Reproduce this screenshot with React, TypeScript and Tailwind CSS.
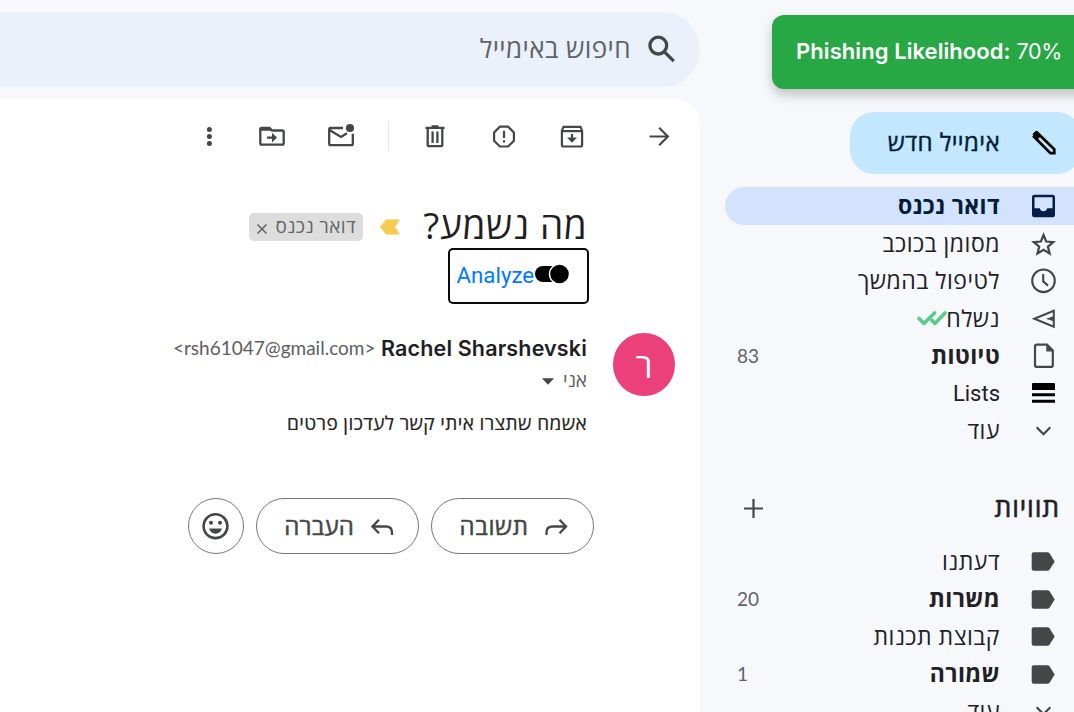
import React, { type ReactNode } from "react";

type IconProps = { children: ReactNode; className?: string };

function Icon({ children, className = "stroke-[2.3]" }: IconProps) {
  return (
    <svg viewBox="0 0 32 32" className={`h-8 w-8 shrink-0 fill-none stroke-[#444746] ${className}`}>
      {children}
    </svg>
  );
}

const icons = {
  inbox: (
    <Icon className="stroke-none">
      <path
        fill="#041e49"
        fillRule="evenodd"
        d="M6.3 4.7h18.4q2.3 0 2.3 2.3v18q0 2.3-2.3 2.3H6.3q-2.3 0-2.3-2.3V7q0-2.3 2.3-2.3ZM6.5 7.2v11h5.3a3.8 3.8 0 0 0 7.4 0h5.3v-11Z"
      />
    </Icon>
  ),
  star: (
    <Icon className="stroke-[2.1]">
      <path
        d="M16 7.4 18.5 13.5 25.2 14 20.1 18.3 21.7 24.8 16 21.3 10.3 24.8 11.9 18.3 6.8 14 13.5 13.5Z"
        transform="translate(-1.4 .2) scale(1.06)"
      />
    </Icon>
  ),
  clock: (
    <Icon className="stroke-[2.1]">
      <circle cx="15.5" cy="15.8" r="11.3" />
      <path d="M15.2 9v7.4l4.8 4.2" />
    </Icon>
  ),
  sent: (
    <Icon className="stroke-[2]">
      <path d="M25.8 8.800 6.300 16.800l19.500 8Z" />
      <path d="M25.500 14.300 18 16.800l7.500 2.500Z" fill="#444746" stroke="none" />
    </Icon>
  ),
  draft: (
    <Icon className="stroke-[2.2]">
      <path d="M9 4.700h10l5.800 5.800v14.400q0 2-2 2H9q-2 0-2-2V6.700q0-2 2-2Z" />
      <path d="M18.300 4.300v7.300h7Z" fill="#444746" stroke="none" />
    </Icon>
  ),
  lists: (
    <Icon className="stroke-none">
      <path fill="#000" d="M4 6.900q0-1 1-1h21q1 0 1 1v6H4ZM4 16.300h23v3H4ZM4 22.800h23v3H4Z" />
    </Icon>
  ),
  more: (
    <Icon className="stroke-[2.2]">
      <path d="m8.700 12.200 6.800 7 6.800-7" />
    </Icon>
  ),
  label: (
    <Icon className="stroke-none">
      <path
        fill="#444746"
        d="M5.700 7.300h13.800q1.200 0 2 1l5.200 8.200-5.200 8.200q-.8 1-2 1H5.700q-2 0-2-2V9.300q0-2 2-2Z"
      />
    </Icon>
  ),
};

type Row = {
  icon: ReactNode;
  text: string;
  count?: string;
  bold?: boolean;
  active?: boolean;
  check?: boolean;
  latin?: boolean;
};

const folders: Row[] = [
  { icon: icons.inbox, text: "דואר נכנס", bold: true, active: true },
  { icon: icons.star, text: "מסומן בכוכב" },
  { icon: icons.clock, text: "לטיפול בהמשך" },
  { icon: icons.sent, text: "נשלח", check: true },
  { icon: icons.draft, text: "טיוטות", count: "83", bold: true },
  { icon: icons.lists, text: "Lists", latin: true },
  { icon: icons.more, text: "עוד" },
];

const labels: Row[] = [
  { icon: icons.label, text: "דעתנו" },
  { icon: icons.label, text: "משרות", count: "20", bold: true },
  { icon: icons.label, text: "קבוצת תכנות" },
  { icon: icons.label, text: "שמורה", count: "1", bold: true },
  { icon: icons.more, text: "עוד" },
];

function NavRow({ icon, text, count, bold, active, check, latin }: Row) {
  return (
    <div
      dir="rtl"
      className={`ml-[25px] flex h-[37.5px] items-center pr-[14.5px] ${
        active ? "rounded-l-full bg-[#d3e3fd] text-[#001d35]" : "text-[#202124]"
      }`}
    >
      {icon}
      <span
        className={`mr-[27.5px] leading-none whitespace-nowrap ${
          latin ? "pt-[2px] font-['Roboto',sans-serif] text-[22px]" : "text-[23px]"
        } ${bold ? "font-bold tracking-[0.4px]" : latin ? "" : "tracking-[0.5px]"}`}
      >
        {text}
      </span>
      {check && (
        <svg viewBox="0 0 30 16" className="-mr-px h-4 w-[30px] fill-none stroke-[#5bcb87] stroke-[3.6]">
          <path d="m2 8.5 5 5L17.5 3M15 10.5l3 3L28 3" strokeLinecap="round" strokeLinejoin="round" />
        </svg>
      )}
      {count && (
        <span
          dir="ltr"
          className="mr-auto ml-[12px] min-w-[22px] text-left font-['Lato',sans-serif] text-[19px] leading-none text-[#5f6368]"
        >
          {count}
        </span>
      )}
    </div>
  );
}

function Toolbar() {
  return (
    <div className="mt-[21px] ml-[193px] flex h-8 items-center">
      <Icon className="stroke-none">
        <g fill="#444746">
          <circle cx="16.4" cy="9.5" r="2.5" />
          <circle cx="16.4" cy="16.5" r="2.5" />
          <circle cx="16.4" cy="23.5" r="2.5" />
        </g>
      </Icon>
      <Icon className="ml-[31px] stroke-[2.3]">
        <path d="M4.3 8.5v14.8q0 1.4 1.4 1.4h20.6q1.4 0 1.4-1.4V11.900q0-1.400-1.400-1.400H16l-2.400-2.600H5.700q-1.400 0-1.400 1.400ZM11 17.600h8" />
        <path d="M3.500 10.800V9.100q0-2 2-2H13l3.300 3.700Z" fill="#444746" stroke="none" />
        <path d="m16 12.700 5 4.900-5 4.900Z" fill="#444746" stroke="none" />
      </Icon>
      <Icon className="ml-[36.5px] stroke-[2.3]">
        <path d="M18 8H5.600q-1.400 0-1.400 1.400v14.300q0 1.400 1.400 1.400h20.800q1.400 0 1.400-1.400v-10M5 10.300l11 6.700 6-3.800" />
        <circle cx="25" cy="8" r="4.100" fill="#444746" stroke="none" />
      </Icon>
      <div className="ml-[31.5px] h-[30px] w-px bg-[#e1e8f0]" />
      <Icon className="ml-[29.5px] stroke-[2.3]">
        <path d="M6.500 7.800h19M12.500 6.500h7" />
        <path d="M8.700 8.500v16.200q0 1.500 1.500 1.500h11.600q1.500 0 1.500-1.500V8.500" />
        <path d="M13.600 11.500v11.500M18.400 11.500v11.500" />
      </Icon>
      <Icon className="ml-[37px] stroke-[2.2]">
        <path d="M11.900 6.700h8.200l5.800 5.800v8.200l-5.800 5.800h-8.200l-5.800-5.800v-8.200Z" />
        <path d="M16 10.800v7.200M16 20.200v2.400" />
      </Icon>
      <Icon className="ml-[36px] stroke-[2.2]">
        <path d="M5.900 10.700 7.500 6.800h17l1.600 3.900v14.200q0 1.600-1.600 1.600H7.500q-1.600 0-1.600-1.600ZM5.900 11.100h20.200M16 14v6" />
        <path d="m11 17.500 5 5.300 5-5.300Z" fill="#444746" stroke="none" />
      </Icon>
      <Icon className="ml-[55px] stroke-[2.2]">
        <path d="M6.500 16.500h17.800M16.200 7.800l8.700 8.700-8.700 8.700" />
      </Icon>
    </div>
  );
}

function Message() {
  return (
    <section className="flex flex-1 flex-col rounded-tr-[26px] bg-white">
      <Toolbar />
      <div dir="rtl" className="mt-[48px] flex h-12 items-center pr-[112.5px]">
        <h1 className="w-[164px] pt-px text-[37px] leading-none tracking-[0.7px] whitespace-nowrap text-[#1f1f1f]">
          מה נשמע?
        </h1>
        <svg viewBox="0 0 20 16" className="mt-[6px] mr-[23.5px] h-4 w-5">
          <path fill="#f7cb4d" d="M6 .5h14l-5 7.5 5 7.5H6L0 8Z" />
        </svg>
        <div className="mt-[6px] mr-[17px] flex h-7 w-[114px] items-center justify-between rounded-[5px] bg-[#ddd] px-[7px] text-[#666]">
          <span className="pb-[2px] text-[19px] leading-none tracking-[0.4px] whitespace-nowrap">דואר נכנס</span>
          <svg viewBox="0 0 12 12" className="mt-[3px] h-3 w-3 fill-none stroke-[#666] stroke-[1.6]">
            <path d="m1.5 1.5 9 9M10.5 1.5l-9 9" />
          </svg>
        </div>
      </div>
      <div className="ml-[447.5px] flex h-[55.5px] w-[141.5px] items-center rounded-[5px] border-[2.5px] border-[#0b0b0b] pl-[7px]">
        <span className="font-['Roboto',sans-serif] text-[22.3px] text-[#007bff]">Analyze</span>
        <svg viewBox="0 0 35 20" className="-mt-[4px] ml-[1px] h-5 w-[35px]">
          <rect x="0" y="2" width="26" height="16" rx="8" fill="#000" />
          <circle cx="24.5" cy="10" r="10" fill="#000" stroke="#fff" strokeWidth="1.4" />
        </svg>
      </div>
      <div dir="rtl" className="mt-[29.5px] flex pr-[25px]">
        <div className="flex h-[63px] w-[62px] items-center justify-center rounded-full bg-[#ec407a] text-[34px] leading-none text-white">
          ר
        </div>
        <div className="mr-[26px] flex flex-col items-start">
          <div className="flex h-[30px] items-center whitespace-nowrap">
            <span className="font-['Inter',sans-serif] text-[21.5px] font-semibold tracking-[0.15px] text-[#1f1f1f]">
              Rachel Sharshevski
            </span>
            <span dir="ltr" className="mr-[5.5px] pt-px font-['Lato',sans-serif] text-[19px] text-[#5e5e5e]">
              &lt;rsh61047@gmail.com&gt;
            </span>
          </div>
          <div className="flex h-[34px] items-center text-[#5e5e5e]">
            <span className="text-[19px] leading-none">אני</span>
            <svg viewBox="0 0 12 7" className="mt-[2px] mr-[9px] h-[7px] w-3 fill-[#444746]">
              <path d="M0 .3h12L6 6.700Z" />
            </svg>
          </div>
          <p className="mt-[14px] text-[19px] leading-6 tracking-[0.38px] whitespace-nowrap text-[#222] [-webkit-text-stroke:0.2px_#222]">
            אשמח שתצרו איתי קשר לעדכון פרטים
          </p>
        </div>
      </div>
      <div
        dir="rtl"
        className="mt-[63px] flex h-14 gap-3 pr-[106px] text-[24px] leading-none text-[#444746] [-webkit-text-stroke:0.5px_#444746]"
      >
        <button className="flex w-[163px] items-center rounded-full border border-[#747775] pr-[21px]">
          <Icon>
            <path d="M6.500 25v-2.500q0-6 6-6h12.800M19.500 9.800l6.600 6.700-6.600 6.700" />
          </Icon>
          <span className="mr-[11.5px] pb-px tracking-[0.6px]">תשובה</span>
        </button>
        <button className="flex w-[163px] items-center rounded-full border border-[#747775] pr-[20px]">
          <Icon>
            <path d="M26 25v-2.500q0-6-6-6H7.200M13 9.800l-6.600 6.700 6.600 6.700" />
          </Icon>
          <span className="mr-3 pb-px tracking-[0.2px]">העברה</span>
        </button>
        <button className="flex w-14 items-center justify-center rounded-full border border-[#747775]">
          <Icon className="stroke-[2.6]">
            <circle cx="15.500" cy="16.200" r="11.900" />
            <g fill="#444746" stroke="none">
              <circle cx="11" cy="12.700" r="2" />
              <circle cx="20" cy="12.700" r="2" />
              <path d="M9 18.500h13q-2 5.200-6.500 5.200t-6.500-5.200Z" />
            </g>
          </Icon>
        </button>
      </div>
    </section>
  );
}

export default function App() {
  return (
    <div className="relative flex h-[712px] w-[1074px] overflow-hidden bg-[#f6f8fc] font-['Open_Sans','Noto_Sans',sans-serif]">
      <main className="flex w-[700px] flex-col pt-3">
        <div dir="rtl" className="mb-3 flex h-[75px] shrink-0 items-center rounded-r-full bg-[#eaf1fb] pr-[22px]">
          <Icon className="stroke-[3.3]">
            <circle cx="12.3" cy="11.600" r="8.400" />
            <path d="m18.400 17.800 9.400 9.400" />
          </Icon>
          <span className="mr-[15px] pb-[4px] text-[26px] leading-none tracking-[0.4px] whitespace-nowrap text-[#5f6368]">
            חיפוש באימייל
          </span>
        </div>
        <Message />
      </main>

      <aside className="w-[374px] shrink-0 pt-[112px]">
        <div
          dir="rtl"
          className="mr-[-7px] ml-[150px] flex h-[62px] items-center rounded-[24px] bg-[#c2e7ff] pr-[21px] text-[#001d35]"
        >
          <Icon>
            <path d="M9.500 6 26.300 22.300v3.900h-3.900L6 9.700Z" stroke="#000" strokeWidth="2.700" />
            <path
              d="M5.600 8.400q-.8-1 0-1.900L7.300 4.800q1-.9 2 0L13 8.500l-3.900 3.900Z"
              fill="#000"
              stroke="#000"
              strokeWidth="1"
            />
          </Icon>
          <span className="mr-[28px] pb-[3px] text-[24px] leading-none tracking-[0.4px] whitespace-nowrap [-webkit-text-stroke:0.4px_#001d35]">
            אימייל חדש
          </span>
        </div>
        <nav className="mt-[13px]">
          {folders.map((row) => (
            <NavRow key={row.text} {...row} />
          ))}
        </nav>
        <div dir="rtl" className="mt-[38px] mb-[15px] flex h-10 items-center justify-between pr-[14px] pl-[37px]">
          <h2 className="text-[26.5px] leading-none tracking-[0.9px] text-[#1f1f1f] [-webkit-text-stroke:0.6px_#1f1f1f]">
            תוויות
          </h2>
          <Icon className="stroke-[2.2]">
            <path d="M16.500 7v19M7 16.500h19" />
          </Icon>
        </div>
        {labels.map((row) => (
          <NavRow key={row.text} {...row} />
        ))}
      </aside>

      <div className="absolute top-[15px] left-[772px] flex h-[74px] w-[320px] items-center rounded-[12px] bg-[#28a745] pb-px pl-6 font-['Inter',sans-serif] text-[22px] whitespace-pre text-white shadow-[0_6px_12px_rgba(0,0,0,0.22)]">
        <strong className="font-semibold tracking-[0.07px]">Phishing Likelihood:</strong>
        <span className="text-[21.5px] tracking-[-0.3px]"> 70%</span>
      </div>
    </div>
  );
}
